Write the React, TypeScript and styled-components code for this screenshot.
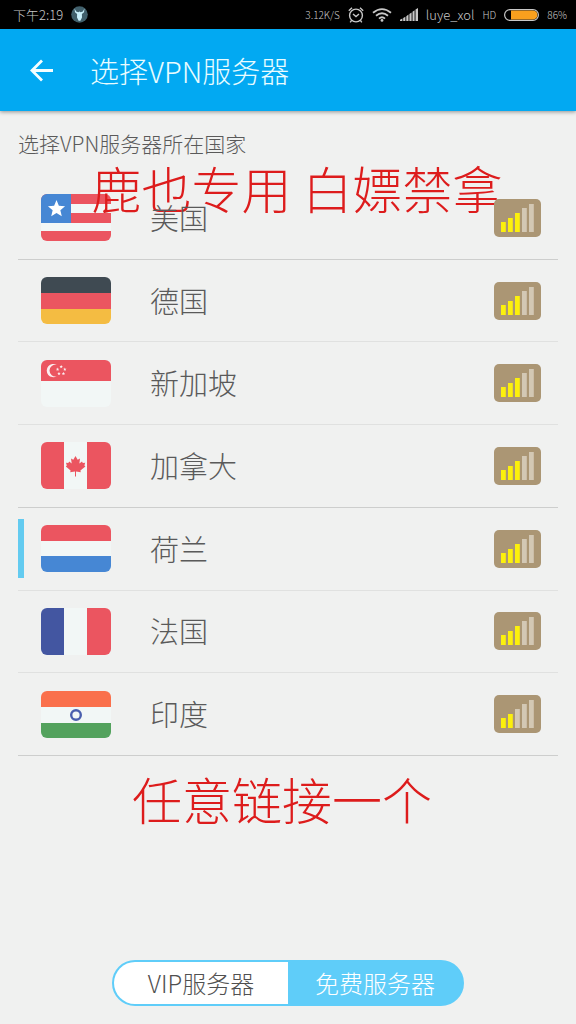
import React, { useState } from "react";
import styled, { createGlobalStyle } from "styled-components";

const GlobalStyle = createGlobalStyle`
  *, *::before, *::after { box-sizing: border-box; }
  body {
    margin: 0;
    background: #f0f1f0;
    font-family: "Noto Sans CJK SC", "Noto Sans", sans-serif;
    font-weight: 300;
    color: #5a5a5a;
  }
  button {
    font: inherit;
    color: inherit;
    background: none;
    border: 0;
    padding: 0;
    cursor: pointer;
  }
  svg { display: block; flex: none; }
`;

const Page = styled.div`
  display: flex;
  flex-direction: column;
  min-height: 100vh;
`;

const StatusBar = styled.div`
  display: flex;
  align-items: center;
  justify-content: space-between;
  height: 29px;
  padding: 0 9px 0 13px;
  background: #000;
  color: #c8c8c8;
`;

const StatusGroup = styled.div`
  display: flex;
  align-items: center;
  gap: 8px;
`;

const StatusText = styled.span<{ $small?: boolean }>`
  font-size: ${(p) => (p.$small ? 10 : 13)}px;
  line-height: 20px;
  white-space: nowrap;
`;

const AppBar = styled.header`
  display: flex;
  align-items: center;
  gap: 36px;
  height: 82px;
  padding: 0 28px;
  background: #02a9f2;
  color: #e9fcff;
  box-shadow: 0 1px 4px rgba(0, 0, 0, 0.4);
`;

const BackButton = styled.button`
  width: 26px;
  height: 26px;
`;

const Title = styled.h1`
  margin: 0;
  font-size: 29px;
  line-height: 40px;
  font-weight: 300;
`;

const Main = styled.main`
  padding: 16px 18px 0;
`;

const Caption = styled.h2`
  margin: 0;
  font-size: 21px;
  line-height: 32px;
  font-weight: 300;
`;

const ListArea = styled.section`
  position: relative;
  padding-top: 18px;
`;

const ServerList = styled.ul`
  display: grid;
  grid-auto-rows: 1fr;
  min-height: 579px;
  margin: 0;
  padding: 0;
  list-style: none;
`;

const ServerItem = styled.li`
  display: flex;
  border-bottom: 1px solid #e0e1e0;
  &:nth-child(3n + 1) { border-bottom-color: #cdcecd; }
`;

const ServerButton = styled.button`
  display: flex;
  flex: 1;
  align-items: center;
  padding-right: 17px;
  text-align: left;
`;

const Marker = styled.span<{ $on: boolean }>`
  width: 6px;
  height: 59px;
  margin-right: 17px;
  background: ${(p) => (p.$on ? "#63cbf0" : "transparent")};
`;

const CountryName = styled.span`
  flex: 1;
  margin-left: 39px;
  padding-bottom: 2px;
  font-size: 29px;
  line-height: 40px;
  z-index: 2;
`;

const Badge = styled.svg`
  z-index: 2;
`;

const Note = styled.p<{ $over?: boolean }>`
  margin: 0;
  color: #dd1c1c;
  font-size: 50px;
  line-height: 60px;
  white-space: nowrap;
  ${(p) =>
    p.$over
      ? `position: absolute; top: -2px; left: 0; right: 0; z-index: 1; padding-left: 18px; text-align: center; pointer-events: none;`
      : `padding: 12px 12px 0 0; text-align: center;`}
`;

const Footer = styled.footer`
  display: flex;
  justify-content: center;
  margin-top: auto;
  padding: 24px 18px 18px;
`;

const Segmented = styled.div`
  display: flex;
  width: 352px;
  height: 46px;
  border: 2px solid #5fcdf9;
  border-radius: 23px;
  background: #5fcdf9;
  overflow: hidden;
`;

const Segment = styled.button<{ $active: boolean }>`
  flex: 1;
  font-size: 24px;
  line-height: 40px;
  background: ${(p) => (p.$active ? "#5fcdf9" : "#fff")};
  color: ${(p) => (p.$active ? "#fff" : "#505050")};
`;

const RED = "#eb5560";
const WHITE = "#f2f7f6";

type Band = [string, number, number, number, number];

const bands: Record<string, Band[]> = {
  us: [
    [RED, 0, 0, 70, 10],
    [RED, 0, 19, 70, 10],
    [RED, 0, 37, 70, 10],
    ["#4687d4", 0, 0, 30, 29],
  ],
  de: [
    ["#3f4a52", 0, 0, 70, 16],
    [RED, 0, 16, 70, 16],
    ["#f4bc42", 0, 32, 70, 15],
  ],
  sg: [[RED, 0, 0, 70, 21]],
  ca: [
    [RED, 0, 0, 23, 47],
    [RED, 46, 0, 24, 47],
  ],
  nl: [
    [RED, 0, 0, 70, 16],
    ["#4687d4", 0, 31, 70, 16],
  ],
  fr: [
    ["#4356a1", 0, 0, 23, 47],
    [RED, 46, 0, 24, 47],
  ],
  in: [
    ["#fa704c", 0, 0, 70, 16],
    ["#53a25d", 0, 32, 70, 15],
  ],
};

function star(cx: number, cy: number, r: number) {
  return Array.from({ length: 10 }, (_, i) => {
    const a = (Math.PI / 5) * i - Math.PI / 2;
    const q = i % 2 ? r * 0.45 : r;
    return `${cx + q * Math.cos(a)},${cy + q * Math.sin(a)}`;
  }).join(" ");
}

function Flag({ code }: { code: string }) {
  return (
    <svg width="70" height="47" viewBox="0 0 70 47" aria-hidden="true">
      <defs>
        <clipPath id={`clip-${code}`}>
          <rect width="70" height="47" rx="6" />
        </clipPath>
      </defs>
      <g clipPath={`url(#clip-${code})`}>
        <rect width="70" height="47" fill={WHITE} />
        {bands[code].map(([fill, x, y, w, h], i) => (
          <rect key={i} x={x} y={y} width={w} height={h} fill={fill} />
        ))}
        {code === "us" && <polygon points={star(15.5, 15, 9)} fill="#fff" />}
        {code === "sg" && (
          <g fill="#fbeef0">
            <path d="M15.8 5A6.6 6.6 0 1 0 15.8 16.2A5.8 5.8 0 1 1 15.8 5Z" />
            {[0, 1, 2, 3, 4].map((i) => {
              const a = ((Math.PI * 2) / 5) * i - Math.PI / 2;
              return (
                <polygon
                  key={i}
                  points={star(20.2 + 3.8 * Math.cos(a), 10.5 + 3.8 * Math.sin(a), 1.8)}
                />
              );
            })}
          </g>
        )}
        {code === "ca" && (
          <path
            fill={RED}
            d="M34.5 14L36.7 17.7L39 16.6L38.4 21.6L41 19.5L41.8 21L44.2 20.8L43.4 23.6L44.4 24.5L39.4 28.6L39.8 30.2L35 29.6V34.5H34V29.6L29.2 30.2L29.6 28.6L24.8 24.5L25.8 23.6L25 20.8L27.3 21L28.2 19.5L30.7 21.6L30 16.6L32.3 17.7Z"
          />
        )}
        {code === "in" && (
          <circle cx="35" cy="24" r="4.8" fill="none" stroke="#4a5fae" strokeWidth="2.4" />
        )}
      </g>
    </svg>
  );
}

function Signal({ level }: { level: number }) {
  return (
    <Badge width="47" height="38" viewBox="0 0 47 38" role="img" aria-label={`${level} / 5`}>
      <rect width="47" height="38" rx="5" fill="#ab9674" />
      {[23, 19, 14, 9, 5].map((top, i) => (
        <rect
          key={top}
          x={7 + i * 7}
          y={top}
          width="4.8"
          height={33 - top}
          fill={i < level ? "#fcf00c" : "#d3c8b4"}
        />
      ))}
    </Badge>
  );
}

const servers = [
  { code: "us", name: "美国", level: 3 },
  { code: "de", name: "德国", level: 3 },
  { code: "sg", name: "新加坡", level: 3 },
  { code: "ca", name: "加拿大", level: 3 },
  { code: "nl", name: "荷兰", level: 3 },
  { code: "fr", name: "法国", level: 3 },
  { code: "in", name: "印度", level: 2 },
];

const plans = ["VIP服务器", "免费服务器"];

function StatusIcons() {
  return (
    <>
      <svg width="16" height="16" viewBox="0 0 16 16" fill="none" stroke="#c8c8c8" strokeWidth="1.4">
        <circle cx="8" cy="8.5" r="6.4" />
        <path d="M5 7L8 9.5L11 7M0.8 3.8L4 0.8M15.2 3.8L12 0.8M3.6 13.4L2.2 15.4M12.4 13.4L13.8 15.4" />
      </svg>
      <svg width="20" height="14" viewBox="0 0 20 14" fill="none" stroke="#c8c8c8" strokeWidth="1.8">
        <path d="M1 4.8Q10 -2.6 19 4.8M4 7.8Q10 2.8 16 7.8M7 10.6Q10 8 13 10.6" />
        <circle cx="10" cy="12.4" r="1.4" fill="#c8c8c8" stroke="none" />
      </svg>
      <svg width="18" height="13" viewBox="0 0 18 13" fill="#c8c8c8">
        <path d="M0 13V11.8L2.4 10.6V13ZM3.2 13V10L5.4 8.8V13ZM6.3 13V8.2L8.5 6.6V13ZM9.4 13V6L11.6 4.4V13ZM12.5 13V3.7L14.6 2.2V13ZM15.5 13V1.4L18 0V13Z" />
      </svg>
    </>
  );
}

export default function App() {
  const [country, setCountry] = useState("nl");
  const [plan, setPlan] = useState(plans[1]);

  return (
    <Page>
      <GlobalStyle />
      <StatusBar>
        <StatusGroup>
          <StatusText>下午2:19</StatusText>
          <svg width="17" height="17" viewBox="0 0 17 17">
            <circle cx="8.5" cy="8.5" r="8.3" fill="#41606c" />
            <path
              d="M3.5 2.4L5.2 5.4L7.4 6.2L8.5 5.4L9.6 6.2L11.8 5.4L13.5 2.4L13 6.2L10.9 8L11 11.5L9.4 14.8H7.6L6 11.5L6.1 8L4 6.2Z"
              fill="#c9f0fb"
            />
          </svg>
        </StatusGroup>
        <StatusGroup>
          <StatusText $small>3.12K/S</StatusText>
          <StatusIcons />
          <StatusText>luye_xol</StatusText>
          <StatusText $small>HD</StatusText>
          <svg width="35" height="12" viewBox="0 0 35 12">
            <rect x="0.6" y="0.6" width="33.8" height="10.8" rx="5.4" fill="none" stroke="#c8c8c8" strokeWidth="1.2" />
            <path d="M7 1.6H29Q33.4 2 33.4 6T29 10.4H7Z" fill="#f9a01e" />
          </svg>
          <StatusText $small>86%</StatusText>
        </StatusGroup>
      </StatusBar>
      <AppBar>
        <BackButton type="button" aria-label="返回">
          <svg width="26" height="26" viewBox="0 0 26 26" fill="none" stroke="#f4feff" strokeWidth="2.8">
            <path d="M25 13.5H4M14 3.5L4 13.5L14 23.5" />
          </svg>
        </BackButton>
        <Title>选择VPN服务器</Title>
      </AppBar>
      <Main>
        <Caption>选择VPN服务器所在国家</Caption>
        <ListArea>
          <Note $over>鹿也专用 白嫖禁拿</Note>
          <ServerList>
            {servers.map((s) => (
              <ServerItem key={s.code}>
                <ServerButton
                  type="button"
                  aria-pressed={country === s.code}
                  onClick={() => setCountry(s.code)}
                >
                  <Marker $on={country === s.code} />
                  <Flag code={s.code} />
                  <CountryName>{s.name}</CountryName>
                  <Signal level={s.level} />
                </ServerButton>
              </ServerItem>
            ))}
          </ServerList>
        </ListArea>
        <Note>任意链接一个</Note>
      </Main>
      <Footer>
        <Segmented role="group" aria-label="服务器类型">
          {plans.map((p) => (
            <Segment key={p} type="button" $active={plan === p} aria-pressed={plan === p} onClick={() => setPlan(p)}>
              {p}
            </Segment>
          ))}
        </Segmented>
      </Footer>
    </Page>
  );
}
